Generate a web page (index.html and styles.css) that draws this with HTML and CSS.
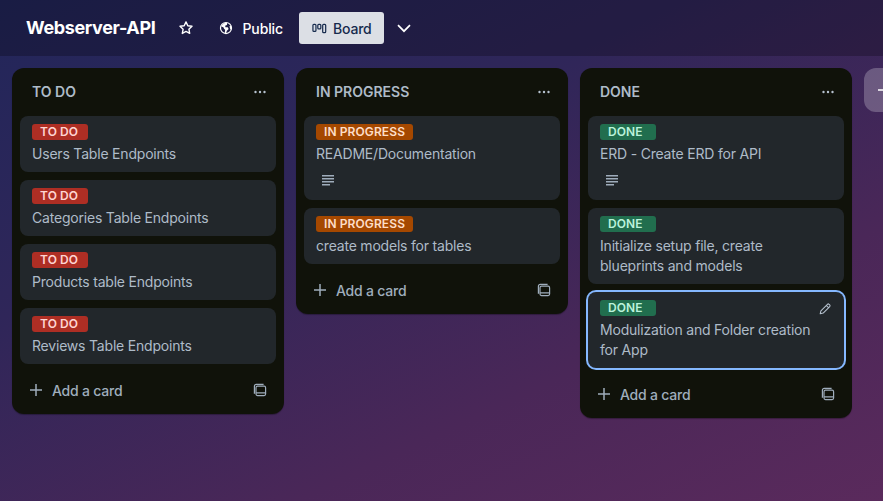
FILE: index.html
```html
<!DOCTYPE html>
<html lang="en">
<head>
<meta charset="utf-8">
<title>Webserver-API</title>
<link rel="stylesheet" href="styles.css">
</head>
<body>
<svg class="defs" width="0" height="0" aria-hidden="true">
  <symbol id="dots" viewBox="0 0 16 16"><circle cx="3.500" cy="8" r="1.200"/><circle cx="8" cy="8" r="1.200"/><circle cx="12.500" cy="8" r="1.200"/></symbol>
  <symbol id="plus" viewBox="0 0 16 16"><path d="M8 2v12M2 8h12" fill="none" stroke="currentColor" stroke-width="1.500"/></symbol>
  <symbol id="tpl" viewBox="0 0 16 16"><g fill="none" stroke="currentColor" stroke-width="1.200"><rect x="4" y="4.200" width="9.600" height="9.400" rx="1.500"/><path d="M4 10.800h9.600M2.400 11.800V4.200c0-1 .8-1.800 1.800-1.800h7.400"/></g></symbol>
  <symbol id="desc" viewBox="0 0 16 16"><path d="M2 3h12v1.400H2zM2 6h12v1.400H2zM2 9h12v1.400H2zM2 12h8v1.400H2z"/></symbol>
</svg>
<div class="app">
  <header class="topbar">
    <h1 class="title">Webserver-API</h1>
    <svg class="ic-star" viewBox="0 0 16 16"><path d="M8 1.900l1.800 3.900 4.200.5-3.100 2.900.8 4.200L8 11.400l-3.700 2.100.8-4.200L2 6.300l4.200-.5z" fill="none" stroke="currentColor" stroke-width="1.400" stroke-linejoin="round"/></svg>
    <div class="vis">
      <svg class="ic-globe" viewBox="0 0 16 16"><circle cx="8" cy="8" r="6.300" fill="none" stroke="currentColor" stroke-width="1.400"/><path d="M7 2C5 3 3.600 4.500 2.600 6.200L5 7l1 2 1 1-.4 3.800 1.400.4 1-3 2-2-1-2H7.400L7 5.500l2-1 .5-2.500zM12 6l1.800-.5.400 3L13 10z" fill="currentColor"/></svg>
      <span>Public</span>
    </div>
    <div class="board-btn">
      <svg class="ic-board" viewBox="0 0 16 16"><g fill="none" stroke="currentColor" stroke-width="1.300"><rect x="1" y="3.500" width="3.200" height="7.500" rx="1"/><rect x="6.200" y="3.500" width="3.200" height="5" rx="1"/><rect x="11.400" y="3.500" width="3.200" height="9" rx="1"/></g></svg>
      <span>Board</span>
    </div>
    <svg class="ic-chev" viewBox="0 0 16 16"><path d="M2 5.200l6 6 6-6" fill="none" stroke="currentColor" stroke-width="1.700"/></svg>
  </header>
  <main class="board">
    <section class="list">
      <div class="list-head"><h2>TO DO</h2><svg class="ic-dots"><use href="#dots"/></svg></div>
      <div class="cards">
        <article class="card"><span class="label red">TO DO</span><p>Users Table Endpoints</p></article>
        <article class="card"><span class="label red">TO DO</span><p>Categories Table Endpoints</p></article>
        <article class="card"><span class="label red">TO DO</span><p>Products table Endpoints</p></article>
        <article class="card"><span class="label red">TO DO</span><p>Reviews Table Endpoints</p></article>
      </div>
      <div class="list-foot"><svg class="ic-plus"><use href="#plus"/></svg><span>Add a card</span><svg class="ic-tpl"><use href="#tpl"/></svg></div>
    </section>
    <section class="list">
      <div class="list-head"><h2>IN PROGRESS</h2><svg class="ic-dots"><use href="#dots"/></svg></div>
      <div class="cards">
        <article class="card"><span class="label orange">IN PROGRESS</span><p>README/Documentation</p><svg class="ic-desc"><use href="#desc"/></svg></article>
        <article class="card"><span class="label orange">IN PROGRESS</span><p>create models for tables</p></article>
      </div>
      <div class="list-foot"><svg class="ic-plus"><use href="#plus"/></svg><span>Add a card</span><svg class="ic-tpl"><use href="#tpl"/></svg></div>
    </section>
    <section class="list">
      <div class="list-head"><h2>DONE</h2><svg class="ic-dots"><use href="#dots"/></svg></div>
      <div class="cards">
        <article class="card"><span class="label green">DONE</span><p>ERD - Create ERD for API</p><svg class="ic-desc"><use href="#desc"/></svg></article>
        <article class="card"><span class="label green">DONE</span><p>Initialize setup file, create blueprints and models</p></article>
        <article class="card active"><span class="label green">DONE</span><p>Modulization and Folder creation for App</p>
          <svg class="ic-pen" viewBox="0 0 16 16"><path d="M2.500 13.500l.8-3.400 7.500-7.500a1.300 1.300 0 0 1 1.800 0l.8.8a1.300 1.300 0 0 1 0 1.800l-7.500 7.500zM9.500 4l2.500 2.500" fill="none" stroke="currentColor" stroke-width="1.200" stroke-linejoin="round"/></svg>
        </article>
      </div>
      <div class="list-foot"><svg class="ic-plus"><use href="#plus"/></svg><span>Add a card</span><svg class="ic-tpl"><use href="#tpl"/></svg></div>
    </section>
    <div class="add-list"><svg class="ic-plus-w"><use href="#plus"/></svg></div>
  </main>
</div>
</body>
</html>
```
FILE: styles.css
```css
* { box-sizing: border-box; }
html, body { margin: 0; height: 100%; }
body {
  font-family: Inter, "Liberation Sans", sans-serif;
  overflow: hidden;
  background: linear-gradient(155deg, #22265a 0%, #2f2659 35%, #4a2758 70%, #5a2a5c 100%);
}
.defs { position: absolute; }
.app { width: 883px; height: 501px; overflow: hidden; }
.topbar {
  height: 56px;
  display: flex;
  align-items: center;
  padding-left: 26px;
  background: rgba(0, 0, 0, 0.24);
  color: #fff;
}
.title { margin: 0; font-size: 18px; line-height: 32px; font-weight: 700; white-space: nowrap; letter-spacing: -0.36px; }
.ic-star { width: 16px; height: 16px; margin-left: 23px; flex: none; }
.vis { display: flex; align-items: center; margin-left: 25px; font-size: 14px; font-weight: 500; letter-spacing: -0.1px; }
.ic-globe { width: 14px; height: 14px; margin-right: 9px; }
.board-btn {
  display: flex;
  align-items: center;
  margin-left: 16px;
  height: 32px;
  width: 85px;
  padding-left: 13px;
  border-radius: 3px;
  background: #dcdfe5;
  color: #172b4d;
  font-size: 14px;
  font-weight: 500;
  letter-spacing: -0.2px;
}
.ic-board { width: 15px; height: 15px; margin-right: 6px; }
.ic-chev { width: 16px; height: 16px; margin-left: 12px; flex: none; }
.board {
  display: flex;
  align-items: flex-start;
  gap: 12px;
  padding: 12px 12px 0;
  width: 1100px;
}
.list {
  width: 272px;
  flex: none;
  background: #10120a;
  border-radius: 12px;
  box-shadow: 0 1px 1px rgba(0, 0, 0, 0.3);
  color: #aebbc8;
}
.list-head {
  display: flex;
  align-items: center;
  justify-content: space-between;
  height: 48px;
  padding: 0 16px 0 20px;
}
.list-head h2 { margin: 0; font-size: 14px; font-weight: 600; line-height: 20px; }
.ic-dots { width: 16px; height: 16px; fill: #b6c2cf; }
.cards { display: flex; flex-direction: column; gap: 8px; padding: 0 8px; }
.card {
  position: relative;
  background: #22272b;
  border-radius: 8px;
  padding: 8px 12px;
  color: #aebbc8;
  font-size: 14px;
  line-height: 20px;
  letter-spacing: -0.2px;
}
.card p { margin: 4px 0 0; padding-right: 8px; }
.card.active { box-shadow: 0 0 0 2px #85b8ff; }
.label {
  display: block;
  width: max-content;
  min-width: 56px;
  height: 16px;
  padding: 0 8px;
  border-radius: 3px;
  font-size: 12px;
  font-weight: 600;
  line-height: 16px;
  letter-spacing: 0.1px;
}
.red { background: #ae2e24; color: #ffd5d2; }
.orange { background: #a54800; color: #fedec8; }
.green { background: #216e4e; color: #baf3db; }
.ic-desc { display: block; width: 16px; height: 16px; margin: 8px 0 4px 4px; fill: #9fadbc; }
.ic-pen { position: absolute; top: 10px; right: 12px; width: 14px; height: 14px; color: #b6c2cf; }
.list-foot {
  display: flex;
  align-items: center;
  height: 50px;
  padding: 2px 16px 0;
  color: #9fadbc;
  font-size: 14px;
  font-weight: 500;
  letter-spacing: -0.2px;
}
.list-foot span { flex: 1; }
.ic-plus { width: 16px; height: 16px; margin-right: 8px; color: #9fadbc; }
.ic-tpl { width: 16px; height: 16px; color: #9fadbc; }
.add-list {
  width: 272px;
  height: 44px;
  flex: none;
  display: flex;
  align-items: center;
  padding-left: 12px;
  border-radius: 12px;
  background: rgba(255, 255, 255, 0.24);
}
.ic-plus-w { width: 16px; height: 16px; color: #fff; }
```
